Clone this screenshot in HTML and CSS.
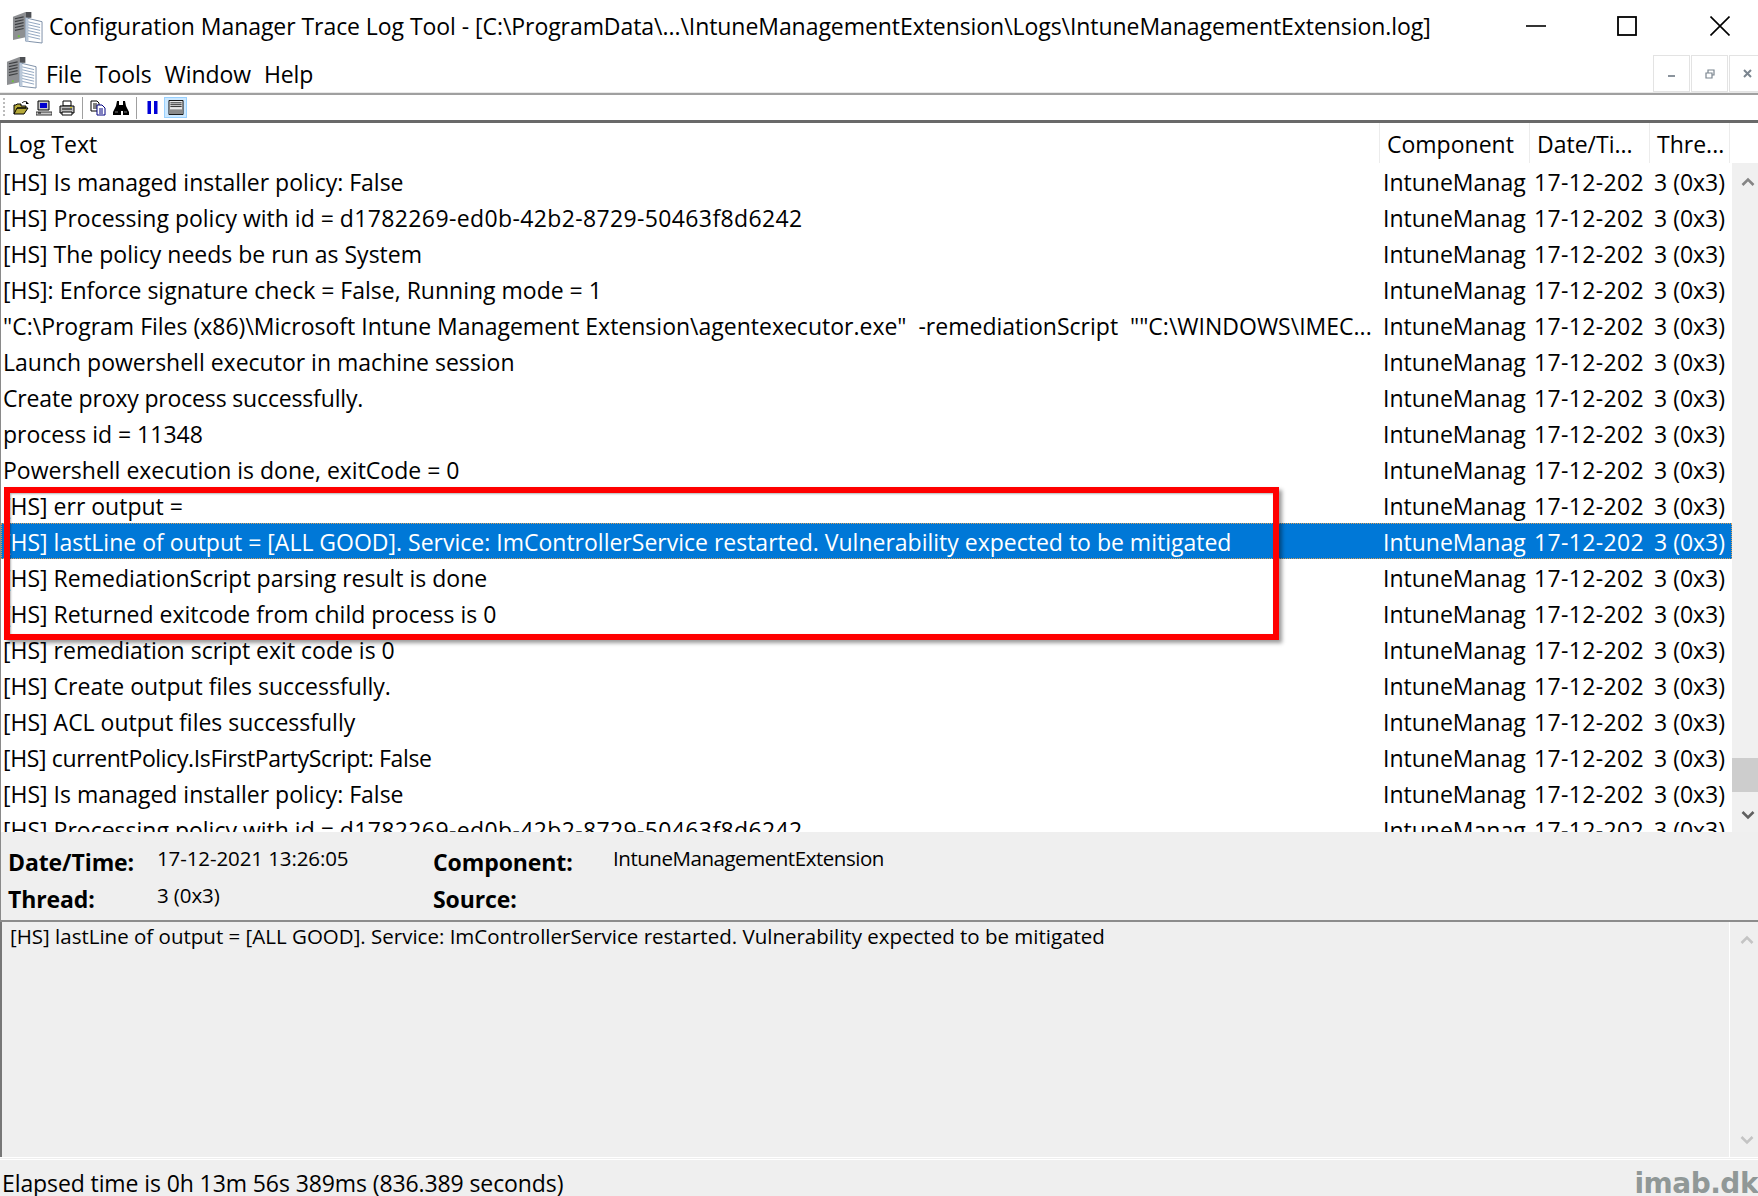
FILE: index.html
```html
<!DOCTYPE html>
<html lang="en">
<head>
<meta charset="utf-8">
<title>Configuration Manager Trace Log Tool</title>
<link rel="stylesheet" href="styles.css">
</head>
<body>
<svg class="defs" width="0" height="0" aria-hidden="true">
  <symbol id="app" viewBox="0 0 32 34">
    <path d="M1 6 14 1v26L1 30z" fill="#8d8f92"/>
    <path d="M14 1h6v6h-6z" fill="#4e5054"/>
    <path d="M3 8l9-2M3 11l9-2M3 14l9-2M3 17l9-2M3 20l9-2" stroke="#3d3f42" stroke-width="1.2" fill="none"/>
    <rect x="6" y="25" width="2" height="2" fill="#6fc23c"/>
    <path d="M14 7 31 11v22l-17-2z" fill="#fff" stroke="#7c8ea6" stroke-width="1"/>
    <path d="M16 11l13 3M16 14l13 3M16 17l13 3M16 20l13 3M16 23l13 3M16 26l13 3" stroke="#8fa4bf" stroke-width="1" fill="none"/>
    <path d="M14 7v24l3 1V8z" fill="#b9c7d8"/>
  </symbol>
</svg>

<header class="titlebar">
  <svg class="title-icon"><use href="#app"/></svg>
  <h1 class="title-text">Configuration Manager Trace Log Tool - [C:\ProgramData\...\IntuneManagementExtension\Logs\IntuneManagementExtension.log]</h1>
  <div class="win-controls">
    <svg class="win-btn" viewBox="0 0 20 20"><path d="M0 10h20" stroke="#000" stroke-width="1.6"/></svg>
    <svg class="win-btn" viewBox="0 0 20 20"><rect x="1" y="1" width="18" height="18" fill="none" stroke="#000" stroke-width="1.8"/></svg>
    <svg class="win-btn" viewBox="0 0 20 20"><path d="M.5.5l19 19M19.5.5l-19 19" stroke="#000" stroke-width="1.6"/></svg>
  </div>
</header>

<nav class="menubar">
  <svg class="menu-icon"><use href="#app"/></svg>
  <span class="menu-item">File</span>
  <span class="menu-item">Tools</span>
  <span class="menu-item">Window</span>
  <span class="menu-item">Help</span>
  <div class="mdi-controls">
    <span class="mdi-btn"><svg viewBox="0 0 12 12" width="12" height="12"><path d="M2 8h7" stroke="#8a939c" stroke-width="2"/></svg></span>
    <span class="mdi-btn"><svg viewBox="0 0 12 12" width="12" height="12"><path d="M2 5h6v5H2zM4 5V2h6v5H8" fill="none" stroke="#7b858f" stroke-width="1.2"/></svg></span>
    <span class="mdi-btn"><svg viewBox="0 0 12 12" width="12" height="12"><path d="M2 2l7 7M9 2L2 9" stroke="#7b858f" stroke-width="2"/></svg></span>
  </div>
</nav>

<div class="toolbar">
  <span class="grip"></span>
  <svg class="tool" viewBox="0 0 16 16"><path d="M1 14V5h2l1-1h4v2h5v2H4L1 14h10l4-6H4" fill="#b5a93a" stroke="#000" stroke-width="1"/><path d="M9 3c2-2 4-2 5 0" fill="none" stroke="#000"/><path d="M13 1v3h3z" fill="#000"/></svg>
  <svg class="tool" viewBox="0 0 16 16"><path d="M2 1h11v9H2z" fill="#c8c8c8" stroke="#000"/><path d="M4 3h7v5H4z" fill="#0000d0"/><path d="M0 12h16v3H0z" fill="#c8c8c8" stroke="#333"/><path d="M2 13h3" stroke="#000"/></svg>
  <svg class="tool" viewBox="0 0 16 16"><path d="M4 1h8v5H4z" fill="#fff" stroke="#000"/><path d="M1 6h14v7H1z" fill="#bdbdbd" stroke="#000"/><path d="M3 9h10" stroke="#000"/><path d="M3 12h10v3H3z" fill="#fff" stroke="#000"/><path d="M11 7h2v1h-2z" fill="#e0d020"/></svg>
  <span class="tool-sep"></span>
  <svg class="tool" viewBox="0 0 16 16"><path d="M1 1h6l2 2v8H1z" fill="#fff" stroke="#000"/><path d="M3 4h4M3 6h4M3 8h4" stroke="#000"/><path d="M7 5h5l3 3v7H7z" fill="#fff" stroke="#000080"/><path d="M9 9h4M9 11h4M9 13h4" stroke="#000080"/></svg>
  <svg class="tool" viewBox="0 0 16 16"><path d="M4 1h2v4h4V1h2l1 5 3 6v3h-6v-4h-2v4H0v-3l3-6z" fill="#000"/><path d="M2 12h3M11 12h3" stroke="#777"/></svg>
  <span class="tool-sep"></span>
  <svg class="tool pause" viewBox="0 0 10 13"><path d="M0 0h3.500v13H0zM6.500 0H10v13H6.500z" fill="#0000d8"/></svg>
  <span class="tool-active"><svg class="tool-inner" viewBox="0 0 16 16"><path d="M.5.500h15v15H.5z" fill="#e8e8e8" stroke="#000"/><path d="M2 3h12M2 5h12M2 7h12" stroke="#222"/><path d="M1 10h14v5H1z" fill="#8a8a8a"/></svg></span>
</div>

<main class="log-pane">
  <div class="head-row">
    <span class="head col-log">Log Text</span>
    <span class="head col-comp">Component</span>
    <span class="head col-date">Date/Ti...</span>
    <span class="head col-thread">Thre...</span>
  </div>
  <div class="list-wrap">
    <div class="rows">
      <div class="row"><span class="col-log">[HS] Is managed installer policy: False</span><span class="col-comp">IntuneManag</span><span class="col-date">17-12-202</span><span class="col-thread">3 (0x3)</span></div>
      <div class="row"><span class="col-log">[HS] Processing policy with id = <span class="hash">d1782269-ed0b-42b2-8729-50463f8d6242</span></span><span class="col-comp">IntuneManag</span><span class="col-date">17-12-202</span><span class="col-thread">3 (0x3)</span></div>
      <div class="row"><span class="col-log">[HS] The policy needs be run as System</span><span class="col-comp">IntuneManag</span><span class="col-date">17-12-202</span><span class="col-thread">3 (0x3)</span></div>
      <div class="row"><span class="col-log">[HS]: Enforce signature check = False, Running mode = <span class="hash">1</span></span><span class="col-comp">IntuneManag</span><span class="col-date">17-12-202</span><span class="col-thread">3 (0x3)</span></div>
      <div class="row"><span class="col-log">"C:\Program Files (x86)\Microsoft Intune Management Extension\agentexecutor.exe"&nbsp; -remediationScript&nbsp; ""C:\WINDOWS\IMEC...</span><span class="col-comp">IntuneManag</span><span class="col-date">17-12-202</span><span class="col-thread">3 (0x3)</span></div>
      <div class="row"><span class="col-log">Launch powershell executor in machine session</span><span class="col-comp">IntuneManag</span><span class="col-date">17-12-202</span><span class="col-thread">3 (0x3)</span></div>
      <div class="row"><span class="col-log tight">Create proxy process successfully.</span><span class="col-comp">IntuneManag</span><span class="col-date">17-12-202</span><span class="col-thread">3 (0x3)</span></div>
      <div class="row"><span class="col-log">process id = 11348</span><span class="col-comp">IntuneManag</span><span class="col-date">17-12-202</span><span class="col-thread">3 (0x3)</span></div>
      <div class="row"><span class="col-log">Powershell execution is done, exitCode = 0</span><span class="col-comp">IntuneManag</span><span class="col-date">17-12-202</span><span class="col-thread">3 (0x3)</span></div>
      <div class="row"><span class="col-log">[HS] err output =</span><span class="col-comp">IntuneManag</span><span class="col-date">17-12-202</span><span class="col-thread">3 (0x3)</span></div>
      <div class="row selected"><span class="col-log">[HS] lastLine of output = [ALL GOOD]. Service: ImControllerService restarted. Vulnerability expected to be mitigated</span><span class="col-comp">IntuneManag</span><span class="col-date">17-12-202</span><span class="col-thread">3 (0x3)</span></div>
      <div class="row"><span class="col-log">[HS] RemediationScript parsing result is done</span><span class="col-comp">IntuneManag</span><span class="col-date">17-12-202</span><span class="col-thread">3 (0x3)</span></div>
      <div class="row"><span class="col-log">[HS] Returned exitcode from child process is 0</span><span class="col-comp">IntuneManag</span><span class="col-date">17-12-202</span><span class="col-thread">3 (0x3)</span></div>
      <div class="row"><span class="col-log">[HS] remediation script exit code is 0</span><span class="col-comp">IntuneManag</span><span class="col-date">17-12-202</span><span class="col-thread">3 (0x3)</span></div>
      <div class="row"><span class="col-log">[HS] Create output files successfully.</span><span class="col-comp">IntuneManag</span><span class="col-date">17-12-202</span><span class="col-thread">3 (0x3)</span></div>
      <div class="row"><span class="col-log">[HS] ACL output files successfully</span><span class="col-comp">IntuneManag</span><span class="col-date">17-12-202</span><span class="col-thread">3 (0x3)</span></div>
      <div class="row"><span class="col-log tighter">[HS] currentPolicy.IsFirstPartyScript: False</span><span class="col-comp">IntuneManag</span><span class="col-date">17-12-202</span><span class="col-thread">3 (0x3)</span></div>
      <div class="row"><span class="col-log">[HS] Is managed installer policy: False</span><span class="col-comp">IntuneManag</span><span class="col-date">17-12-202</span><span class="col-thread">3 (0x3)</span></div>
      <div class="row"><span class="col-log">[HS] Processing policy with id = <span class="hash">d1782269-ed0b-42b2-8729-50463f8d6242</span></span><span class="col-comp">IntuneManag</span><span class="col-date">17-12-202</span><span class="col-thread">3 (0x3)</span></div>
      <div class="highlight"></div>
    </div>
    <div class="scrollbar">
      <svg class="arrow" viewBox="0 0 14 10"><path d="M1.500 8 7 2.500 12.500 8" fill="none" stroke="#858585" stroke-width="2.600"/></svg>
      <span class="thumb"></span>
      <svg class="arrow" viewBox="0 0 14 10"><path d="M1.500 2 7 7.500 12.500 2" fill="none" stroke="#606060" stroke-width="2.600"/></svg>
    </div>
  </div>
</main>

<section class="details">
  <div class="detail-col col-a">
    <b class="label">Date/Time:</b><span class="value">17-12-2021 13:26:05</span>
    <b class="label">Thread:</b><span class="value">3 (0x3)</span>
  </div>
  <div class="detail-col col-b">
    <b class="label">Component:</b><span class="value value-name">IntuneManagementExtension</span>
    <b class="label">Source:</b><span class="value"></span>
  </div>
</section>

<section class="message">
  <p class="message-text">[HS] lastLine of output = [ALL GOOD]. Service: ImControllerService restarted. Vulnerability expected to be mitigated</p>
  <div class="msg-scroll">
    <svg class="arrow" viewBox="0 0 14 10"><path d="M1.500 8 7 2.500 12.500 8" fill="none" stroke="#c4c4c4" stroke-width="2.600"/></svg>
    <svg class="arrow" viewBox="0 0 14 10"><path d="M1.500 2 7 7.500 12.500 2" fill="none" stroke="#c4c4c4" stroke-width="2.600"/></svg>
  </div>
</section>

<footer class="statusbar">
  <span class="status-text">Elapsed time is 0h 13m 56s 389ms (836.389 seconds)</span>
  <span class="watermark">imab.dk</span>
</footer>
</body>
</html>
```
FILE: styles.css
```css
* { box-sizing: border-box; }
html, body { margin: 0; padding: 0; }
body {
  width: 1758px;
  height: 1196px;
  overflow: hidden;
  display: flex;
  flex-direction: column;
  background: #fff;
  color: #000;
  font-family: "Open Sans", "Noto Sans", sans-serif;
  font-size: 23px;
  position: relative;
}
.defs { position: absolute; }

.titlebar { height: 52px; display: flex; align-items: center; padding-left: 12px; flex: none; }
.title-icon { width: 31px; height: 33px; flex: none; margin-top: 2px; }
.title-text { margin: 0 0 0 6px; font-size: 23px; font-weight: 400; white-space: nowrap; line-height: 1; letter-spacing: -0.06px; }
.win-controls { margin-left: auto; display: flex; gap: 71px; padding-right: 28px; }
.win-btn { width: 20px; height: 20px; display: block; }
.win-btn:last-child { margin-left: 2px; }

.menubar { height: 41px; display: flex; align-items: center; padding-left: 6px; gap: 13px; flex: none; position: relative; }
.menu-icon { width: 31px; height: 33px; margin-right: -4px; flex: none; }
.menu-item { line-height: 1; padding-top: 4px; letter-spacing: -0.1px; }
.mdi-controls { margin-left: auto; display: flex; gap: 1px; align-self: flex-start; margin-top: 3px; margin-right: -8px; }
.mdi-btn { width: 37px; height: 37px; border: 1px solid #e3e3e3; display: flex; align-items: center; justify-content: center; }

.toolbar { height: 30px; display: flex; align-items: center; padding-left: 3px; flex: none; border-top: 2px solid #a0a0a0; border-bottom: 3px solid #696969; box-shadow: 0 -1px 0 #e8e8e8; }
.grip { width: 2px; height: 20px; margin-right: 8px; background: repeating-linear-gradient(#bbb 0 2px, transparent 2px 4px); }
.tool { width: 16px; height: 16px; margin-right: 7px; flex: none; }
.tool-sep { width: 1px; height: 22px; background: #a0a0a0; margin: 0 7px 0 0; }
.pause { width: 11px; height: 13px; margin: 0 6px 0 3px; }
.tool-active { width: 23px; height: 21px; background: #cce8ff; border: 1px solid #99d1ff; display: flex; align-items: center; justify-content: center; }
.tool-inner { width: 16px; height: 15px; }

.log-pane { flex: none; height: 709px; display: flex; flex-direction: column; border-left: 1px solid #8a8a8a; }
.head-row { height: 40px; display: flex; align-items: center; flex: none; }
.head { height: 100%; display: flex; align-items: center; border-right: 1px solid #ececec; padding-top: 2px; }
.head.col-log { width: 1379px; padding-left: 6px; }
.head.col-comp { width: 150px; padding-left: 7px; }
.head.col-date { width: 120px; padding-left: 7px; }
.head.col-thread { width: 80px; padding-left: 7px; }

.list-wrap { flex: 1; min-height: 0; display: flex; }
.rows { flex: 1; min-width: 0; overflow: hidden; position: relative; }
.row { height: 36px; display: flex; align-items: center; white-space: nowrap; padding-top: 2px; }
.row > span { overflow: hidden; }
.row .col-log { width: 1379px; padding-left: 2px; }
.row .col-comp { width: 150px; padding-left: 3px; padding-right: 4px; }
.row .col-date { width: 120px; padding-left: 4px; padding-right: 6px; letter-spacing: 0.35px; }
.row .col-thread { width: 82px; padding-left: 4px; }
.row .tight { letter-spacing: -0.16px; }
.row .tighter { letter-spacing: -0.36px; }
.hash { letter-spacing: 0.37px; }
.selected { background: #0078d7; color: #fff; outline: 1px dotted #d9a05b; outline-offset: -1px; }

.highlight { position: absolute; left: 3px; top: 324px; width: 1275px; height: 153px; border: 6px solid #f00; box-shadow: 3px 3px 4px rgba(0,0,0,.4), inset 1px 1px 2px rgba(0,0,0,.3); pointer-events: none; }

.scrollbar { width: 26px; flex: none; background: #f0f0f0; display: flex; flex-direction: column; align-items: center; padding-top: 14px; }
.arrow { width: 14px; height: 10px; display: block; flex: none; margin-left: 5px; }
.thumb { width: 26px; height: 34px; background: #cdcdcd; margin-top: 571px; margin-bottom: 18px; }

.details { height: 90px; flex: none; background: #efefef; display: flex; border-left: 1px solid #8a8a8a; border-bottom: 2px solid #8c8c8c; }
.detail-col { display: grid; grid-template-rows: 37px 37px; padding-top: 12px; }
.col-a { grid-template-columns: 149px auto; width: 432px; padding-left: 7px; }
.col-b { grid-template-columns: 180px auto; }
.label { font-weight: 700; font-size: 23px; line-height: 37px; letter-spacing: -0.1px; }
.value { font-size: 20.500px; line-height: 28px; letter-spacing: -0.1px; }
.value-name { letter-spacing: -0.46px; }

.message { height: 235px; flex: none; background: #efefef; display: flex; border-left: 2px solid #777; }
.message-text { flex: 1; margin: 0; padding: 0 0 0 8px; font-size: 20.500px; line-height: 28px; }
.msg-scroll { width: 29px; flex: none; border-left: 1px solid #fff; display: flex; flex-direction: column; align-items: center; justify-content: space-between; padding: 13px 0 12px; }

.statusbar { flex: 1; background: #efefef; display: flex; align-items: center; justify-content: space-between; padding-left: 2px; border-top: 3px double #fff; min-height: 0; overflow: hidden; }
.status-text { white-space: nowrap; margin-top: 10px; letter-spacing: -0.1px; }
.watermark { font-family: "DejaVu Sans", sans-serif; font-weight: 700; font-size: 28px; letter-spacing: -0.5px; color: #909897; margin-top: 12px; margin-right: 0; line-height: 1; }
```
